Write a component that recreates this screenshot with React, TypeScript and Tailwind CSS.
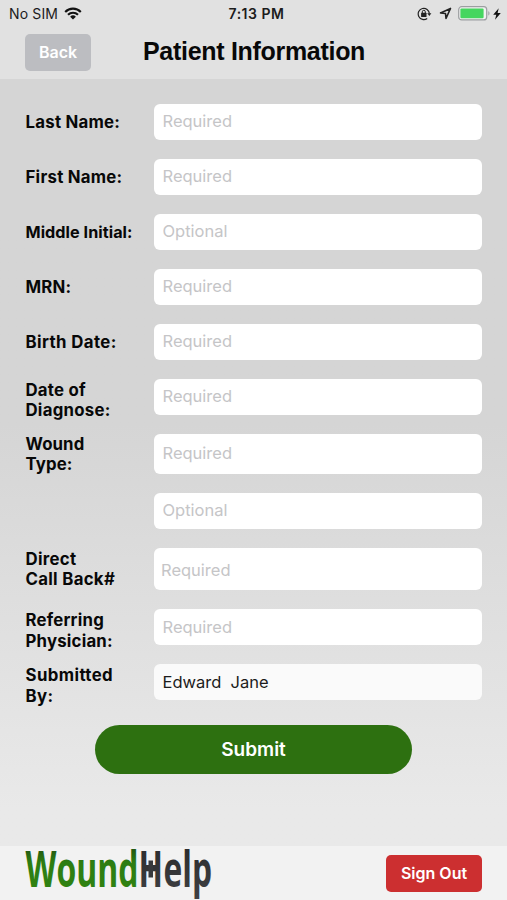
import React, { useState } from 'react';

interface FieldConfig {
    id: string;
    label: string;
    placeholder?: string;
    initial?: string;
    inputClass: string;
    labelClass: string;
}

const FIELDS: FieldConfig[] = [
    { id: 'lastName', label: 'Last Name:', placeholder: 'Required', inputClass: 'h-9 px-[8.5px] pb-[2px] bg-white', labelClass: 'text-[16.8px] tracking-[0.25px]' },
    { id: 'firstName', label: 'First Name:', placeholder: 'Required', inputClass: 'h-9 px-[8.5px] pb-[2px] bg-white', labelClass: 'text-[16.8px] tracking-[0.25px]' },
    { id: 'middleInitial', label: 'Middle Initial:', placeholder: 'Optional', inputClass: 'h-9 px-[8.5px] pb-[2px] bg-white', labelClass: 'text-[16.2px] tracking-[0.05px]' },
    { id: 'mrn', label: 'MRN:', placeholder: 'Required', inputClass: 'h-9 px-[8.5px] pb-[2px] bg-white', labelClass: 'text-[16.8px] tracking-[0.2px]' },
    { id: 'birthDate', label: 'Birth Date:', placeholder: 'Required', inputClass: 'h-9 px-[8.5px] pb-[2px] bg-white', labelClass: 'text-[16.8px] tracking-[0.4px]' },
    { id: 'diagnoseDate', label: 'Date of\nDiagnose:', placeholder: 'Required', inputClass: 'h-9 px-[8.5px] pb-[2px] bg-white', labelClass: 'text-[16.8px] tracking-[0.25px] pt-[6px]' },
    { id: 'woundType', label: 'Wound\nType:', placeholder: 'Required', inputClass: 'h-10 px-[8.5px] pb-[2px] bg-white', labelClass: 'text-[16.8px] tracking-[0.1px]' },
    { id: 'woundDetail', label: '', placeholder: 'Optional', inputClass: 'h-9 px-[8.5px] pb-[2px] bg-white', labelClass: 'text-[16.8px]' },
    { id: 'callBack', label: 'Direct\nCall Back#', placeholder: 'Required', inputClass: 'h-[42px] px-[7px] pt-[1px] bg-white', labelClass: 'text-[16.8px] tracking-[0.3px]' },
    { id: 'physician', label: 'Referring\nPhysician:', placeholder: 'Required', inputClass: 'h-9 px-[8.5px] pb-[1px] bg-white', labelClass: 'text-[16.8px] tracking-[0.2px] pt-[7px]' },
    { id: 'submittedBy', label: 'Submitted\nBy:', initial: 'Edward  Jane', inputClass: 'h-9 px-[8.5px] pb-[1px] bg-[#fafafa]', labelClass: 'text-[16.8px] tracking-[0.4px] pt-[7px]' },
];

const WifiIcon = () => (
    <svg width="18" height="13" viewBox="0 0 18 13" fill="none" stroke="#111" strokeWidth="2.1">
        <path d="M1.2 4.9a11 11 0 0 1 15.6 0" />
        <path d="M4 7.8a7.1 7.1 0 0 1 10 0" />
        <path d="M9 12.6 6.1 9.8a4.1 4.1 0 0 1 5.8 0Z" fill="#111" stroke="none" />
    </svg>
);

const RotationLockIcon = () => (
    <svg width="15" height="14" viewBox="0 0 15 14" fill="none" stroke="#222">
        <path d="M10.2 11.4A5.6 5.6 0 1 1 12.4 6.6" strokeWidth="1.2" />
        <path d="M10.2 6.2h4.2l-2.1 2.7Z" fill="#222" stroke="none" />
        <rect x="4.1" y="5.8" width="5.4" height="4.1" rx=".5" fill="#222" stroke="none" />
        <path d="M5.3 6V4.8a1.5 1.5 0 0 1 3 0V6" strokeWidth="1" />
    </svg>
);

const LocationIcon = () => (
    <svg width="13" height="13" viewBox="0 0 13 13" fill="none" stroke="#222" strokeWidth="1.6" strokeLinejoin="round">
        <path d="M11.5 1.4 1.5 5.9l5 .6.5 5Z" />
    </svg>
);

const BatteryIcon = () => (
    <svg width="33" height="15" viewBox="0 0 33 15">
        <rect x=".7" y=".7" width="28" height="13.2" rx="3" fill="#f2f2f2" stroke="#9c9ea1" strokeWidth="1.2" />
        <rect x="2.4" y="2.4" width="23.2" height="9.8" rx="1.2" fill="#45d65f" />
        <path d="M30.3 5.2c1.6.5 1.6 3.7 0 4.2Z" fill="#9c9ea1" />
    </svg>
);

const BoltIcon = () => (
    <svg width="8" height="12" viewBox="0 0 8 12" fill="#111">
        <path d="M5.7.2.2 6.7h3.1L2 11.8l5.8-6.9H4.6Z" />
    </svg>
);

const Logo = () => (
    <svg width="190" height="54" viewBox="0 0 190 54" className="overflow-visible font-['Open_Sans',sans-serif] font-bold" fontSize="50">
        <defs>
            <linearGradient id="green" x1="0" y1="0" x2="0" y2="54" gradientUnits="userSpaceOnUse">
                <stop offset=".08" stopColor="#245b12" />
                <stop offset=".3" stopColor="#2d7d12" />
                <stop offset="1" stopColor="#318411" />
            </linearGradient>
            <linearGradient id="gray" x1="0" y1="0" x2="0" y2="54" gradientUnits="userSpaceOnUse">
                <stop offset="0" stopColor="#2b2c2e" />
                <stop offset="1" stopColor="#404144" />
            </linearGradient>
        </defs>
        <text x="0.5" y="40.5" textLength="113" lengthAdjust="spacingAndGlyphs" fill="url(#green)">Wound</text>
        <text y="40.5" fill="url(#gray)">
            <tspan x="113.5" textLength="24.5" lengthAdjust="spacingAndGlyphs">H</tspan>
            <tspan x="138.5" textLength="48.5" lengthAdjust="spacingAndGlyphs">elp</tspan>
        </text>
        <rect x="123.5" y="14.5" width="4.5" height="17" fill="#38393c" />
    </svg>
);

const StatusBar = () => (
    <div className="h-7 pb-[1px] grid grid-cols-[1fr_auto_1fr] items-center pl-[9px] pr-[6px] text-[14px] text-[#1c1c1c]">
        <div className="flex items-center gap-[6px]">
            <span className="tracking-[0.15px]">No SIM</span>
            <WifiIcon />
        </div>
        <span className="pl-[3px] font-semibold tracking-[0.5px]">7:13 PM</span>
        <div className="flex items-center justify-end">
            <RotationLockIcon />
            <div className="ml-[7px]"><LocationIcon /></div>
            <div className="ml-[6px]"><BatteryIcon /></div>
            <div className="ml-[2px]"><BoltIcon /></div>
        </div>
    </div>
);

const App: React.FC = () => {
    const [values, setValues] = useState<Record<string, string>>(
        Object.fromEntries(FIELDS.map(f => [f.id, f.initial ?? '']))
    );

    return (
        <div className="w-full h-[900px] flex flex-col bg-[#e8e8e8] font-[Inter,sans-serif] overflow-hidden">
            <header className="h-[79px] shrink-0 bg-[#e1e1e1]">
                <StatusBar />
                <div className="grid grid-cols-[118px_1fr] pl-[25px] pt-[6px] items-start">
                    <button className="w-[66px] h-[37px] pb-[1px] rounded-[5px] bg-[#bcbdc1] text-white text-[16px] font-semibold">Back</button>
                    <h1 className="font-['Liberation_Sans',sans-serif] font-bold text-[25px] leading-[34px] text-[#080808] tracking-[-0.3px] whitespace-nowrap">Patient Information</h1>
                </div>
            </header>

            <main className="flex-1 flex flex-col px-[25px] pt-[25px] bg-linear-to-b from-[#d5d5d5] from-45% to-[#e9e9e9] to-95%">
                <div className="flex flex-col gap-[19px]">
                    {FIELDS.map(field => (
                        <div key={field.id} className="flex items-center">
                            <label
                                htmlFor={field.id}
                                className={`w-[129px] -my-2 pl-[0.5px] shrink-0 whitespace-pre-line leading-[20.5px] font-bold text-[#080808] ${field.labelClass}`}
                            >
                                {field.label}
                            </label>
                            <input
                                id={field.id}
                                value={values[field.id]}
                                placeholder={field.placeholder}
                                onChange={(e) => setValues({ ...values, [field.id]: e.target.value })}
                                className={`min-w-0 flex-1 rounded-[6px] text-[16.5px] text-[#1c1c1c] placeholder:text-[#c5c5c7] outline-none ${field.inputClass}`}
                            />
                        </div>
                    ))}
                </div>
                <button className="mt-[25px] w-[317px] h-[49px] pt-[1px] self-center rounded-full bg-[#2d7010] text-white text-[19px] font-semibold">Submit</button>
            </main>

            <footer className="h-[54px] shrink-0 flex items-center justify-between px-[25px] bg-[#f2f2f2]">
                <Logo />
                <button className="w-[96px] h-[37px] rounded-[5px] bg-[#cc2f30] text-white text-[16px] font-semibold">Sign Out</button>
            </footer>
        </div>
    );
};

export default App;
